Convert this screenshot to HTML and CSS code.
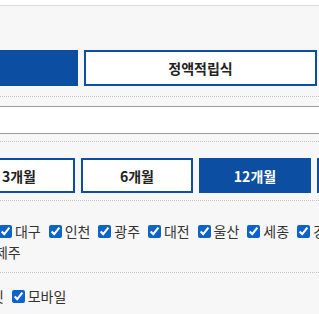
FILE: index.html
```html
<!DOCTYPE html>
<html lang="ko">
<head>
    <meta charset="UTF-8">
    <meta name="viewport" content="width=device-width, initial-scale=1.0">
    <title>적금 상품 검색</title>
    <link rel="stylesheet" href="styles.css">
</head>
<body>
<div class="page">
    <div class="sec sec-top">
        <div class="row row-type">
            <div class="cell">
                <div class="seg seg-wide">
                    <button type="button" class="opt on">자유적립식</button>
                    <button type="button" class="opt">정액적립식</button>
                </div>
            </div>
        </div>
    </div>

    <div class="spacer"></div>

    <div class="sec sec-main">
        <div class="row row-blank"></div>

        <div class="row row-term">
            <div class="cell">
                <div class="seg seg-term">
                    <button type="button" class="opt">1개월</button>
                    <button type="button" class="opt">3개월</button>
                    <button type="button" class="opt">6개월</button>
                    <button type="button" class="opt on">12개월</button>
                    <button type="button" class="opt">24개월</button>
                </div>
            </div>
        </div>

        <div class="row row-area">
            <div class="cell">
                <div class="checks checks-area">
                    <label class="chk"><input type="checkbox" checked><span>전체</span></label>
                    <label class="chk"><input type="checkbox" checked><span>서울</span></label>
                    <label class="chk"><input type="checkbox" checked><span>부산</span></label>
                    <label class="chk"><input type="checkbox" checked><span>대구</span></label>
                    <label class="chk"><input type="checkbox" checked><span>인천</span></label>
                    <label class="chk"><input type="checkbox" checked><span>광주</span></label>
                    <label class="chk"><input type="checkbox" checked><span>대전</span></label>
                    <label class="chk"><input type="checkbox" checked><span>울산</span></label>
                    <label class="chk"><input type="checkbox" checked><span>세종</span></label>
                    <label class="chk"><input type="checkbox" checked><span>경기</span></label>
                    <label class="chk"><input type="checkbox" checked><span>강원</span></label>
                    <label class="chk"><input type="checkbox" checked><span>충청</span></label>
                    <label class="chk"><input type="checkbox" checked><span>전라</span></label>
                    <label class="chk"><input type="checkbox" checked><span>경상</span></label>
                    <label class="chk"><input type="checkbox" checked><span>제주</span></label>
                </div>
            </div>
        </div>

        <div class="row row-device">
            <div class="cell">
                <div class="checks checks-device">
                    <label class="chk"><input type="checkbox" checked><span>전체</span></label>
                    <label class="chk"><input type="checkbox" checked><span>인터넷</span></label>
                    <label class="chk"><input type="checkbox" checked><span>태블릿</span></label>
                    <label class="chk"><input type="checkbox" checked><span>모바일</span></label>
                </div>
            </div>
        </div>
    </div>
</div>
</body>
</html>
```

FILE: styles.css
```css
html, body { margin: 0; padding: 0; background: #fff; }
body { font-family: "Noto Sans CJK KR", "Noto Sans", sans-serif; font-size: 14px; color: #333; }
.page { width: 319px; height: 314px; overflow: hidden; }

.sec { background: #f7f7f7; }
.sec-top { margin-top: 5px; border-top: 1px solid #ddd; border-bottom: 1px solid #999; padding-bottom: 9px; }
.sec-main { border-top: 1px solid #999; height: 200px; }
.spacer { height: 26px; background: #fff; }

.row { border-bottom: 1px dotted #c4c4c4; }
.row-type { padding: 44px 0 10px; }
.row-blank { height: 7px; }
.row-term { padding: 16px 0 7px; }
.row-area { padding: 20px 0 9px; }
.row-device { padding-top: 13px; border-bottom: none; }

.cell { margin-left: -155px; }

.seg { display: flex; gap: 6px; }
.opt { box-sizing: border-box; flex: none; height: 36px; padding: 0; border: 2px solid #0b4ea2; background: #fff; color: #222; font-family: inherit; font-size: 14px; font-weight: bold; cursor: pointer; }
.opt.on { background: #0b4ea2; color: #fff; }
.seg-wide .opt { width: 233px; }
.seg-term .opt { width: 112px; height: 35px; }

.checks { display: flex; flex-wrap: wrap; line-height: 21px; }
.checks-area { width: 580px; margin-left: -15px; }
.checks-area .chk:first-child { margin-left: 20px; }
.checks-device { margin-left: -8px; }
.chk { display: inline-flex; align-items: center; margin-right: 7.9px; white-space: nowrap; cursor: pointer; }
.chk input { width: 13px; height: 13px; margin: 0 3px 0 0; accent-color: #0d63c9; }
```
